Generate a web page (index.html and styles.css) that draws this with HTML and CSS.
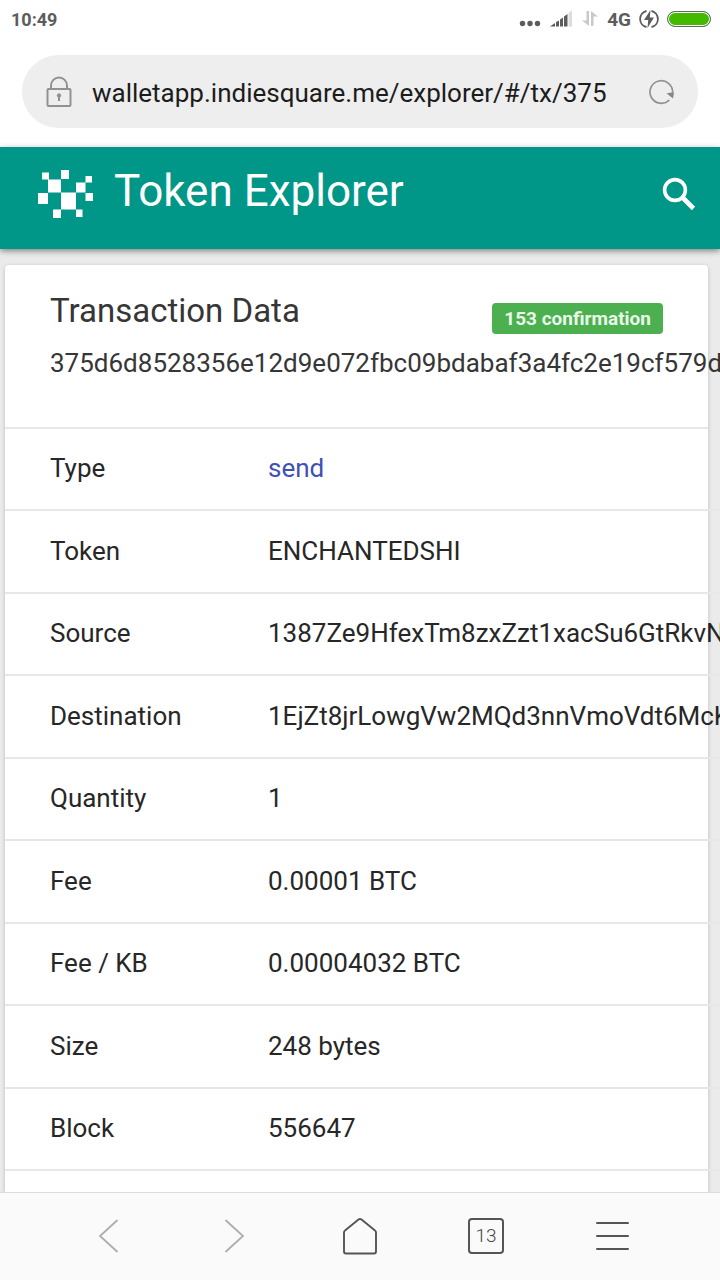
FILE: index.html
```html
<!DOCTYPE html>
<html lang="en">
<head>
  <meta charset="UTF-8" />
  <meta name="viewport" content="width=device-width, initial-scale=1.0"/>
  <title>Token Explorer</title>
  <link rel="stylesheet" href="styles.css">
</head>
<body>

<div class="status-bar">
  <span class="clock">10:49</span>
  <div class="status-icons">
    <svg width="22" height="20" viewBox="0 0 22 20" fill="#5c5c5c">
      <circle cx="3.500" cy="14.500" r="2.700"/><circle cx="11" cy="14.500" r="2.700"/><circle cx="18.500" cy="14.500" r="2.700"/>
    </svg>
    <svg width="24" height="20" viewBox="0 0 24 20" fill="#5c5c5c">
      <path d="M1 17.500L6 14V17.500ZM7 13L10 11.500V17.500H7ZM11 10.500L14 8.500V17.500H11ZM15 7.500L18.500 5V17.500H15Z"/>
      <path d="M19.500 4L23 1.500V17.500H19.500Z" fill="#dcdcdc"/>
    </svg>
    <svg width="18" height="20" viewBox="0 0 18 20" fill="#c9c9c9">
      <path d="M5.500 2H8V17L1 11.500H5.500Z"/><path d="M10 2L17 7.500H12.500V17H10Z"/>
    </svg>
    <span class="network">4G</span>
    <svg width="20" height="20" viewBox="0 0 20 20">
      <path d="M7.500 2A8.200 8.200 0 0 0 7.500 18M12.500 2A8.200 8.200 0 0 1 12.500 18" fill="none" stroke="#5c5c5c" stroke-width="1.800"/>
      <path d="M11.500 1L5 11H9.200L8.500 19L15 8.500H10.800Z" fill="#5c5c5c"/>
    </svg>
    <span class="battery"></span>
  </div>
</div>

<div class="address-bar">
  <svg width="26" height="32" viewBox="0 0 26 32" fill="none" stroke="#919191" stroke-width="2">
    <rect x="1.500" y="13" width="23" height="17" rx="1"/>
    <path d="M5 13V9.500a8 8 0 0 1 16 0V13"/>
    <circle cx="13" cy="19.500" r="1.700" fill="#919191" stroke-width="1"/><path d="M13 20V25"/>
  </svg>
  <input type="text" class="url" aria-label="Address" value="walletapp.indiesquare.me/explorer/#/tx/375" />
  <button class="icon-button" aria-label="Reload">
    <svg width="26" height="26" viewBox="0 0 26 26">
      <path d="M20.300 21A11.300 11.300 0 1 1 23.600 13.500" fill="none" stroke="#919191" stroke-width="1.700"/>
      <path d="M17.500 14.300L25 13.200L24 19.500Z" fill="#858585"/>
    </svg>
  </button>
</div>

<header class="app-bar">
  <svg width="56" height="48" viewBox="0 0 56 48" fill="#fff">
    <path d="M4 2.500h7v7H4zM23 0h8v9h-8zM10 9.500h13v13H10zM47.500 6h6.500v6.500h-6.500zM38 12.500h9.500v10H38zM0 23h10v11H0zM47.500 23H55v8h-7.500zM23 22.500h15v17H23zM15 39.500h8V48h-8zM38 39.500h6.500V47H38z"/>
  </svg>
  <h1>Token Explorer</h1>
  <button class="icon-button" aria-label="Search">
    <svg width="34" height="34" viewBox="0 0 34 34" fill="none" stroke="#fff">
      <circle cx="13" cy="13" r="10.400" stroke-width="3.600"/>
      <path d="M20.500 20.500L31.500 31.500" stroke-width="4.600"/>
    </svg>
  </button>
</header>

<main class="content">
  <div class="card">
    <div class="card-header">
      <div class="card-title">
        <h2>Transaction Data</h2>
        <span class="badge">153 confirmation</span>
      </div>
      <p class="hash">375d6d8528356e12d9e072fbc09bdabaf3a4fc2e19cf579d6</p>
    </div>
    <table class="details">
      <tr><th scope="row">Type</th><td><a href="#send">send</a></td></tr>
      <tr><th scope="row">Token</th><td>ENCHANTEDSHI</td></tr>
      <tr><th scope="row">Source</th><td>1387Ze9HfexTm8zxZzt1xacSu6GtRkvNL</td></tr>
      <tr><th scope="row">Destination</th><td>1EjZt8jrLowgVw2MQd3nnVmoVdt6McK</td></tr>
      <tr><th scope="row">Quantity</th><td>1</td></tr>
      <tr><th scope="row">Fee</th><td>0.00001 BTC</td></tr>
      <tr><th scope="row">Fee / KB</th><td>0.00004032 BTC</td></tr>
      <tr><th scope="row">Size</th><td>248 bytes</td></tr>
      <tr><th scope="row">Block</th><td>556647</td></tr>
    </table>
  </div>
</main>

<nav class="browser-nav">
  <button class="icon-button" aria-label="Back">
    <svg width="36" height="38" viewBox="0 0 36 38" fill="none" stroke="#adadad" stroke-width="1.800" stroke-linecap="round"><path d="M27 3.500L10 19L27 34.500"/></svg>
  </button>
  <button class="icon-button" aria-label="Forward">
    <svg width="36" height="38" viewBox="0 0 36 38" fill="none" stroke="#adadad" stroke-width="1.800" stroke-linecap="round"><path d="M10 3.500L27 19L10 34.500"/></svg>
  </button>
  <button class="icon-button" aria-label="Home">
    <svg width="36" height="38" viewBox="0 0 36 38" fill="none" stroke="#555" stroke-width="1.900" stroke-linejoin="round"><path d="M3 13.500Q2 14.200 2 15.500V34.500Q2 36.500 4 36.500H32Q34 36.500 34 34.500V15.500Q34 14.200 33 13.500L19.500 2.500Q18 1.500 16.500 2.500Z"/></svg>
  </button>
  <button class="icon-button" aria-label="Tabs"><span class="tabs">13</span></button>
  <button class="icon-button" aria-label="Menu">
    <svg width="36" height="38" viewBox="0 0 36 38" fill="none" stroke="#555" stroke-width="2" stroke-linecap="round"><path d="M3 6H34M3 19H34M3 32H34"/></svg>
  </button>
</nav>

</body>
</html>
```

FILE: styles.css
```css
* { box-sizing: border-box; margin: 0; padding: 0; font-family: Roboto, sans-serif; }
body {
  display: flex; flex-direction: column;
  height: 100vh; overflow: hidden;
  background: #fff; color: #272727;
}
svg { display: block; flex-shrink: 0; }
h1, h2, th { font-weight: 400; }
.icon-button {
  display: flex; align-items: center; justify-content: center;
  background: none; border: none; cursor: pointer;
}

.status-bar {
  display: flex; align-items: center; justify-content: space-between;
  height: 38px; padding: 0 9px 0 11px;
  color: #5c5c5c; font-size: 18px; font-weight: 700;
}
.status-icons { display: flex; align-items: center; gap: 8px; }
.network { font-size: 19px; }
.battery {
  width: 44px; height: 16px; border-radius: 8px;
  background: #43b900; border: 1px solid #666; box-shadow: inset 0 0 0 1px #fff;
}

.address-bar {
  display: flex; align-items: center; gap: 18px;
  margin: 17px 22px 19px; padding: 0 23px 0 24px; height: 73px;
  border-radius: 37px; background: #eee;
}
.url {
  flex: 1; min-width: 0; padding: 6px 2px 4px;
  border: none; background: none; color: #1c1c1c; font-size: 26px;
}

.app-bar {
  display: flex; align-items: center; gap: 20px;
  position: relative; height: 102px; padding: 0 24px 8px 38px;
  background: #009688; color: #fff;
  box-shadow: 0 2px 6px rgba(0,0,0,0.45);
}
.app-bar h1 { flex: 1; padding-bottom: 6px; font-size: 44px; line-height: 52px; }

.content { flex: 1; min-height: 0; overflow: hidden; padding: 16px 12px 0 5px; background: #ebebeb; }
.card {
  min-height: 100%; background: #fff; border-radius: 4px 4px 0 0;
  box-shadow: 0 1px 4px rgba(0,0,0,0.2);
}
.card-header { height: 164px; padding: 24px 45px 0; border-bottom: 2px solid #e8e8e8; color: #363636; }
.card-title { display: flex; align-items: flex-start; justify-content: space-between; }
.card-title h2 { font-size: 33px; line-height: 44px; }
.badge {
  margin-top: 14px; padding: 0 12px; border-radius: 4px;
  background: #4caf50; color: #e9f8e9; font-size: 19px; font-weight: 700; line-height: 31px;
}
.hash { margin-top: 11px; font-size: 26px; line-height: 36px; white-space: nowrap; }

.details { min-width: 100%; border-collapse: separate; border-spacing: 0; }
.details tr { height: 82px; }
.details tr:nth-child(even) { height: 83px; }
.details th, .details td {
  padding-bottom: 2px; border-bottom: 2px solid #e8e8e8; font-size: 26px; line-height: 32px;
  text-align: left; white-space: nowrap;
}
.details th { width: 263px; min-width: 263px; padding-left: 45px; }
.details td { padding-right: 45px; }
a { color: #3f51b5; text-decoration: none; }

.browser-nav {
  display: flex; align-items: center; justify-content: space-around;
  height: 88px; padding: 0 45px 2px; border-top: 1px solid #ddd; background: #fafafa;
}
.tabs {
  width: 36px; height: 36px; border: 2px solid #555; border-radius: 4px;
  color: #444; font-size: 19px; font-weight: 300; line-height: 32px;
}
```
